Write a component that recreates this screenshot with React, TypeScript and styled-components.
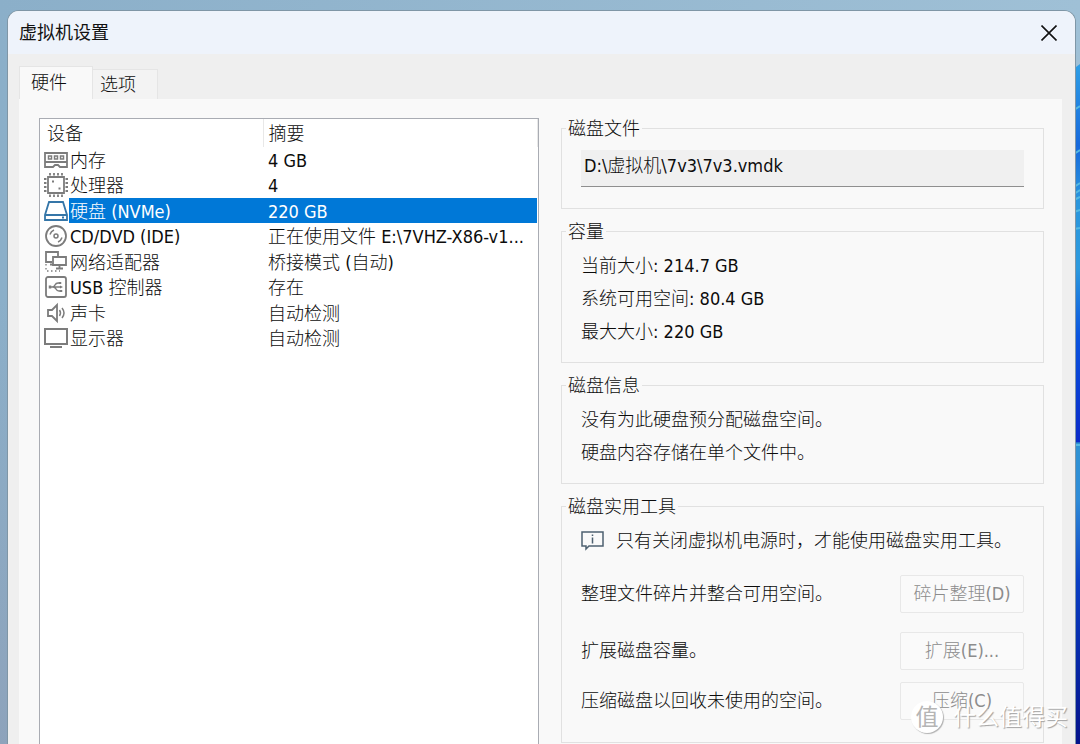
import React from "react";
import styled, { createGlobalStyle, css } from "styled-components";

const GlobalStyle = createGlobalStyle`
  *, *::before, *::after { box-sizing: border-box; }
  body {
    margin: 0;
    font-family: "DejaVu Sans Condensed", "Noto Sans CJK SC", sans-serif;
    font-size: 18px;
    font-weight: 300;
    line-height: 22px;
    color: #0c0c0c;
  }
  button, input { font: inherit; color: inherit; }
`;

const Desktop = styled.div`
  position: relative;
  display: flex;
  min-height: 100vh;
  padding: 11px 5px 0 8px;
  overflow: hidden;
  background:
    linear-gradient(180deg, transparent 40%, rgba(142, 160, 184, 0.8)),
    linear-gradient(90deg, #8bafc9, #9fc0d6);
`;

const Wallpaper = styled.svg`
  position: absolute;
  top: 64px;
  right: 0;
  width: 8px;
  height: 680px;
`;

const Dialog = styled.main`
  position: relative;
  flex: 1;
  display: flex;
  flex-direction: column;
  background: #efefef;
  border-radius: 11px 11px 0 0;
  box-shadow: 0 0 0 1px #7f96a6;
  overflow: hidden;
`;

const TitleBar = styled.header`
  display: flex;
  align-items: center;
  justify-content: space-between;
  height: 43px;
  padding: 0 15px 0 11px;
  background: #eef3fb;
`;

const Title = styled.h1`
  margin: 0;
  font-size: 18px;
  font-weight: 400;
  color: #111;
`;

const CloseButton = styled.button`
  display: flex;
  align-items: center;
  justify-content: center;
  width: 22px;
  height: 22px;
  padding: 0;
  border: 0;
  background: none;
`;

const Tabs = styled.div`
  display: flex;
  align-items: flex-end;
  height: 45px;
  padding-left: 11px;
`;

const Tab = styled.button<{ $active?: boolean }>`
  padding: 0;
  text-align: left;
  border: 1px solid #e5e5e5;
  border-bottom: 0;
  ${(p) =>
    p.$active
      ? css`
          width: 74px;
          height: 33px;
          padding-left: 11px;
          background: #f9f9f9;
        `
      : css`
          width: 65px;
          height: 30px;
          padding-left: 7px;
          background: #f3f3f3;
          border-left: 0;
        `}
`;

const Panel = styled.section`
  flex: 1;
  display: flex;
  gap: 22px;
  margin: 0 13px 0 11px;
  padding: 0 18px 0 20px;
  background: #f9f9f9;
`;

const DeviceList = styled.div`
  flex: 499 1 0;
  min-width: 0;
  margin-top: 19px;
  border: 1px solid #a9acb3;
  border-bottom: 0;
  background: #fff;
`;

const DeviceTable = styled.table`
  width: 100%;
  table-layout: fixed;
  border-collapse: collapse;
`;

const IconColumn = styled.col`
  width: 29px;
`;

const NameColumn = styled.col`
  width: 194px;
`;

const HeadCell = styled.th<{ $first?: boolean }>`
  height: 28px;
  padding: 2px 0 0 ${(p) => (p.$first ? 7 : 5)}px;
  text-align: left;
  font-weight: inherit;
  border-right: 1px solid #e8e8e8;
`;

const DeviceRow = styled.tr<{ $selected?: boolean }>`
  height: 25px;
  &:nth-child(even) { height: 26px; }
  ${(p) =>
    p.$selected &&
    css`
      color: #fff;
      td + td { background: #0078d7; }
    `}
`;

const IconCell = styled.td`
  padding: 0 0 0 4px;
  svg { display: block; }
`;

const TextCell = styled.td<{ $indent: number }>`
  padding: 2px 0 0 ${(p) => p.$indent}px;
  white-space: nowrap;
  overflow: hidden;
  text-overflow: ellipsis;
`;

const Groups = styled.div`
  flex: 484 1 0;
  min-width: 0;
  display: flex;
  flex-direction: column;
  gap: 10px;
  padding-top: 17px;
`;

const Group = styled.fieldset`
  min-width: 0;
  margin: 0;
  padding: 6px 19px 14px;
  border: 1px solid #e1e1e1;
`;

const FileGroup = styled(Group)`
  padding-top: 10px;
  padding-bottom: 21px;
`;

const ToolGroup = styled(Group)`
  padding-bottom: 22px;
`;

const Legend = styled.legend`
  margin-left: -15px;
  padding: 2px 2px 0;
`;

const PathInput = styled.input`
  display: block;
  width: 100%;
  height: 37px;
  padding: 0 3px 8px;
  border: 0;
  border-bottom: 1px solid #8f8f8f;
  background: #f0f0f0;
  outline: none;
`;

const Line = styled.p`
  display: flex;
  align-items: center;
  gap: 12px;
  height: 33px;
  margin: 0;
  white-space: nowrap;
`;

const ToolRow = styled.div<{ $gap: number }>`
  display: flex;
  align-items: center;
  justify-content: space-between;
  margin-top: ${(p) => p.$gap}px;
  white-space: nowrap;
`;

const ToolButton = styled.button`
  width: 124px;
  height: 38px;
  padding: 0;
  border: 1px solid #e8e8e8;
  border-radius: 2px;
  background: #fafafa;
  &:disabled { color: #8c8c8c; }
`;

const Watermark = styled.div`
  position: absolute;
  right: 12px;
  bottom: 11px;
  display: flex;
  align-items: center;
  gap: 10px;
  font-size: 23px;
  font-weight: 400;
  line-height: 32px;
  color: #fff;
  text-shadow: 1px 1px 1px #a0a0a0;
`;

const Seal = styled.span`
  width: 32px;
  height: 32px;
  border-radius: 50%;
  text-align: center;
  background: #fff;
  color: #b5b5b5;
  text-shadow: none;
  box-shadow: 1px 1px 1px #b0b0b0;
`;

type IconName = "memory" | "cpu" | "disk" | "cd" | "network" | "usb" | "sound" | "display";

const shapes: Record<IconName, React.ReactNode> = {
  memory: (
    <>
      <path d="M1 5h22v14h-7l-2-2h-3l-2 2H1z M1 14h22" />
      <path d="M4.500 8h3v3h-3z M10.500 8h3v3h-3z M16.500 8h3v3h-3z" strokeWidth="1.500" />
    </>
  ),
  cpu: (
    <>
      <path d="M4 4h16v16H4z" />
      <path d="M6 0v2.500M10 0v2.500M14 0v2.500M18 0v2.500M6 21.500V24M10 21.500V24M14 21.500V24M18 21.500V24M0 6h2.500M0 10h2.500M0 14h2.500M0 18h2.500M21.500 6H24M21.500 10H24M21.500 14H24M21.500 18H24" />
      <path d="M8 8.500h2M14.500 15.500h2" strokeWidth="2" />
    </>
  ),
  disk: (
    <g stroke="#3576a8">
      <path d="M5 3h14l4 13v5H1v-5z M1 16h22" />
      <path d="M18 18.500h2" />
    </g>
  ),
  cd: (
    <>
      <circle cx="12" cy="12" r="10" />
      <circle cx="12" cy="12" r="2" strokeWidth="1.500" />
      <path d="M6 10.500a7 7 0 0 1 4-4.500M18 13.500a7 7 0 0 1-4 4.500" strokeWidth="1.500" />
    </>
  ),
  network: (
    <>
      <path d="M8 12H2V2h12v4M9 7h13v8H9zM15.500 15v3M12 18.500h7M6 14.500h3" />
      <path d="M2 14v7h14" strokeWidth="1.300" strokeDasharray="1.500 2.500" />
    </>
  ),
  usb: (
    <>
      <rect x="2" y="2" width="20" height="20" rx="2" />
      <path d="M5 12h12M8 12q2 0 3-2t3-2h1M9 12q2 0 3 2t3 2h1" strokeWidth="1.500" />
      <path d="M6 10.500v3M16 7v2M17 15v2" strokeWidth="2.500" />
      <path d="M16 10.500l3 1.500-3 1.500z" fill="#777" stroke="none" />
    </>
  ),
  sound: (
    <>
      <path d="M4 9h4l5-5v16l-5-5H4z" />
      <path d="M15.500 9q2 3 0 6M18 7q4 5 0 10" strokeWidth="1.500" />
    </>
  ),
  display: (
    <>
      <path d="M1 3h22v15H1z" strokeWidth="2" />
      <path d="M6 21h12" strokeWidth="2" />
    </>
  ),
};

const DeviceIcon = ({ name }: { name: IconName }) => (
  <svg width="24" height="24" viewBox="0 0 24 24" fill="none" stroke="#7c7c7c" strokeWidth="1.800" aria-hidden="true">
    {shapes[name]}
  </svg>
);

const devices: { icon: IconName; name: string; summary: string }[] = [
  { icon: "memory", name: "内存", summary: "4 GB" },
  { icon: "cpu", name: "处理器", summary: "4" },
  { icon: "disk", name: "硬盘 (NVMe)", summary: "220 GB" },
  { icon: "cd", name: "CD/DVD (IDE)", summary: "正在使用文件 E:\\7VHZ-X86-v1..." },
  { icon: "network", name: "网络适配器", summary: "桥接模式 (自动)" },
  { icon: "usb", name: "USB 控制器", summary: "存在" },
  { icon: "sound", name: "声卡", summary: "自动检测" },
  { icon: "display", name: "显示器", summary: "自动检测" },
];

const tools = [
  { text: "整理文件碎片并整合可用空间。", action: "碎片整理(D)", gap: 18 },
  { text: "扩展磁盘容量。", action: "扩展(E)...", gap: 19 },
  { text: "压缩磁盘以回收未使用的空间。", action: "压缩(C)", gap: 12 },
];

export default function App() {
  return (
    <Desktop>
      <GlobalStyle />
      <Wallpaper viewBox="0 0 8 680" preserveAspectRatio="none" aria-hidden="true">
        <defs>
          <linearGradient id="petal" x1="0" y1="0" x2="0" y2="1">
            <stop offset="0" stopColor="#2e9fe6" />
            <stop offset=".12" stopColor="#1769dc" />
            <stop offset=".2" stopColor="#2b96dd" />
            <stop offset=".3" stopColor="#2c9ade" />
            <stop offset=".4" stopColor="#0a54df" />
            <stop offset=".556" stopColor="#0b2bc9" />
            <stop offset=".557" stopColor="#2f93d3" />
            <stop offset=".64" stopColor="#2f8cd8" />
            <stop offset=".76" stopColor="#0a3ec4" />
            <stop offset="1" stopColor="#04128a" />
          </linearGradient>
        </defs>
        <path d="M0 6L8 0V680H0z" fill="url(#petal)" />
        <path d="M2 46l6-4M2 90l6-4M2 123l6-4M2 130l6-4M2 136l6-3M2 148l6-2M2 165l6-1M2 381h6" stroke="#55b9e2" strokeWidth="2" />
      </Wallpaper>
      <Dialog>
        <TitleBar>
          <Title>虚拟机设置</Title>
          <CloseButton aria-label="关闭">
            <svg width="16" height="16" viewBox="0 0 16 16" stroke="#111" strokeWidth="1.600" aria-hidden="true">
              <path d="M0.500 0.500l15 15M15.500 0.500l-15 15" />
            </svg>
          </CloseButton>
        </TitleBar>
        <Tabs role="tablist">
          <Tab role="tab" aria-selected="true" $active>硬件</Tab>
          <Tab role="tab" aria-selected="false">选项</Tab>
        </Tabs>
        <Panel>
          <DeviceList>
            <DeviceTable>
              <colgroup>
                <IconColumn />
                <NameColumn />
                <col />
              </colgroup>
              <thead>
                <tr>
                  <HeadCell colSpan={2} $first>设备</HeadCell>
                  <HeadCell>摘要</HeadCell>
                </tr>
              </thead>
              <tbody>
                {devices.map((d) => (
                  <DeviceRow key={d.icon} $selected={d.icon === "disk"}>
                    <IconCell><DeviceIcon name={d.icon} /></IconCell>
                    <TextCell $indent={1}>{d.name}</TextCell>
                    <TextCell $indent={5}>{d.summary}</TextCell>
                  </DeviceRow>
                ))}
              </tbody>
            </DeviceTable>
          </DeviceList>
          <Groups>
            <FileGroup>
              <Legend>磁盘文件</Legend>
              <PathInput aria-label="磁盘文件" readOnly value={"D:\\虚拟机\\7v3\\7v3.vmdk"} />
            </FileGroup>
            <Group>
              <Legend>容量</Legend>
              <Line>当前大小: 214.7 GB</Line>
              <Line>系统可用空间: 80.4 GB</Line>
              <Line>最大大小: 220 GB</Line>
            </Group>
            <Group>
              <Legend>磁盘信息</Legend>
              <Line>没有为此硬盘预分配磁盘空间。</Line>
              <Line>硬盘内容存储在单个文件中。</Line>
            </Group>
            <ToolGroup>
              <Legend>磁盘实用工具</Legend>
              <Line>
                <svg width="23" height="20" viewBox="0 0 23 20" fill="none" stroke="#4d6070" strokeWidth="1.500" aria-hidden="true">
                  <path d="M1 1h21v14H8l-3 3v-3H1zM11.500 6.500v6M11.500 3.500v1.500" />
                </svg>
                只有关闭虚拟机电源时，才能使用磁盘实用工具。
              </Line>
              {tools.map((t) => (
                <ToolRow key={t.action} $gap={t.gap}>
                  <span>{t.text}</span>
                  <ToolButton disabled>{t.action}</ToolButton>
                </ToolRow>
              ))}
            </ToolGroup>
          </Groups>
        </Panel>
      </Dialog>
      <Watermark>
        <Seal>值</Seal>
        <span>什么值得买</span>
      </Watermark>
    </Desktop>
  );
}
